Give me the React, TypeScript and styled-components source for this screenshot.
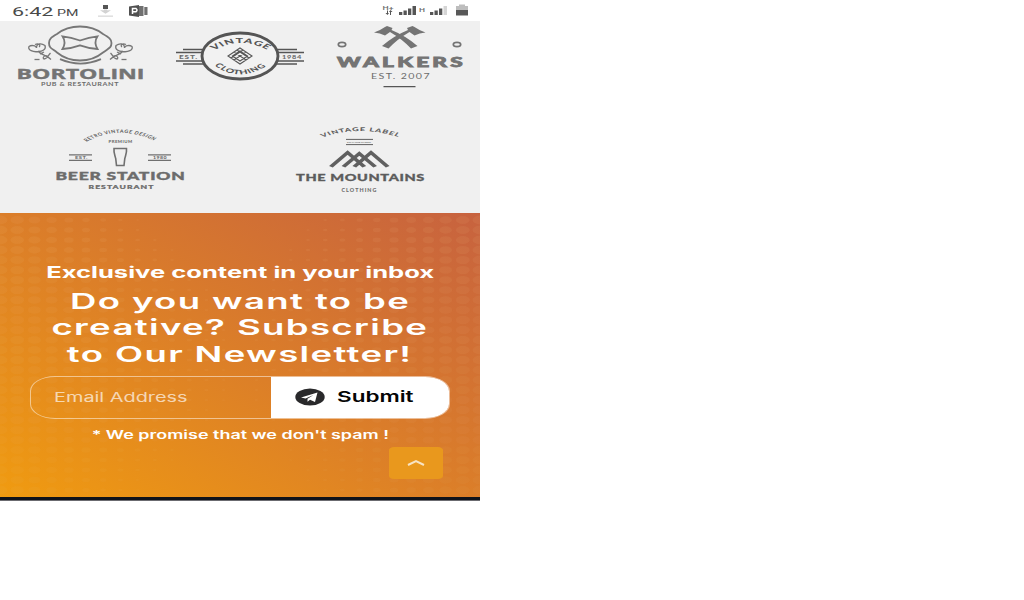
import React from 'react';
import styled, { createGlobalStyle } from 'styled-components';

const GlobalStyle = createGlobalStyle`
  body { margin: 0; background: #fff; font-family: Inter, "Liberation Sans", sans-serif; }
  * { box-sizing: border-box; }
`;

const Screen = styled.div`
  width: 480px;
  display: flex;
  flex-direction: column;
`;

const StatusBar = styled.header`
  height: 21px;
  display: flex;
  align-items: center;
  justify-content: space-between;
  background: #fff;
`;

const Logos = styled.section`
  height: 192px;
  background: #f0f0f0;
  display: flex;
  flex-direction: column;
  gap: 29px;
`;

const LogoRow = styled.div<{ $columns: number }>`
  display: grid;
  grid-template-columns: repeat(${p => p.$columns}, 1fr);
`;

const Drawing = styled.svg`
  display: block;
  font-family: Lato, sans-serif;
`;

const Newsletter = styled.section`
  height: 284px;
  display: grid;
  background: linear-gradient(to top right, #f09b10 0%, #dc7f28 48%, #c7623f 100%);
`;

const DotPattern = styled.svg`
  grid-area: 1 / 1;
  display: block;
`;

const Content = styled.div`
  grid-area: 1 / 1;
  z-index: 1;
  display: flex;
  flex-direction: column;
  align-items: center;
  padding: 47px 30px 0;
  color: #fff;
`;

const Line = styled.div<{ $height: number; $gap?: number }>`
  height: ${p => p.$height}px;
  line-height: ${p => p.$height}px;
  margin-top: ${p => p.$gap ?? 0}px;
  display: flex;
  justify-content: center;
`;

const Wide = styled.span<{ $size: number; $weight?: number; $scale: number; $spacing?: number; $origin?: string }>`
  display: inline-block;
  white-space: nowrap;
  font-size: ${p => p.$size}px;
  font-weight: ${p => p.$weight ?? 400};
  letter-spacing: ${p => p.$spacing ?? 0}px;
  transform: scaleX(${p => p.$scale});
  transform-origin: ${p => p.$origin ?? 'center'};
`;

const Form = styled.div`
  width: 420px;
  height: 43px;
  margin-top: 9px;
  display: flex;
  border: 1px solid rgba(255, 255, 255, 0.5);
  border-radius: 25px / 15px;
  overflow: hidden;
`;

const EmailField = styled.div`
  flex: 1;
  display: flex;
  align-items: center;
  padding: 0 0 2px 23px;
  color: rgba(255, 255, 255, 0.68);
`;

const SubmitButton = styled.button`
  width: 178px;
  border: 0;
  padding: 0 0 2px 24px;
  display: flex;
  align-items: center;
  gap: 12px;
  background: #fff;
  color: #050505;
  font-family: inherit;
`;

const TopButton = styled.button`
  width: 54px;
  height: 32px;
  margin: 0 7px 0 0;
  padding: 0;
  align-self: flex-end;
  display: grid;
  place-items: center;
  border: 0;
  border-radius: 5px / 3px;
  background: #e9981d;
`;

const FooterEdge = styled.footer`
  height: 4px;
  background: #10131a;
  border-bottom: 1px solid #6b6b70;
`;

const dots: { x: number; y: number; k: number }[] = [];
for (let row = 0; row < 28; row++) {
  const y = 7 + row * 10;
  const bulge = Math.sin((Math.PI * y) / 284);
  const left = 130 + 110 * bulge;
  const right = 160 + 80 * bulge;
  for (let col = 0; col < 14; col++) {
    const d = col * 17.2;
    if (d < left) dots.push({ x: d, y, k: 1 - d / left });
    if (d < right) dots.push({ x: 480 - d, y, k: 1 - d / right });
  }
}

type LabelProps = {
  x: number; y: number; w: number; size: number;
  weight?: number; fill?: string; font?: string; spacing?: number; bold?: number;
  children: string;
};

const Label = ({ x, y, w, size, weight = 700, fill = '#6c6c6c', font, spacing = 0, bold = 0, children }: LabelProps) => (
  <text
    x={x} y={y} textLength={w} lengthAdjust="spacingAndGlyphs" fontSize={size} fontWeight={weight}
    fill={fill} fontFamily={font} letterSpacing={spacing} stroke={bold ? fill : 'none'} strokeWidth={bold}
  >
    {children}
  </text>
);

const ArcLabel = ({ id, d, size, w, children }: { id: string; d: string; size: number; w: number; children: string }) => (
  <>
    <path id={id} d={d} fill="none" />
    <text fontSize={size} fontWeight={900} textLength={w} lengthAdjust="spacingAndGlyphs" letterSpacing="0.5">
      <textPath href={`#${id}`} textLength={w} lengthAdjust="spacingAndGlyphs">{children}</textPath>
    </text>
  </>
);

const Bortolini = () => (
  <Drawing width="160" height="70" viewBox="0 21 160 70" fill="none" stroke="#777" strokeWidth="1.800">
    <path d="M80 26.500C91 26.500 98 30 103 34C109 37.500 111.500 39 111.500 43C111.500 48 108 48.500 103 52.500C97 57.500 90 60.500 80 60.500C70 60.500 63 57.500 57 52.500C52 48.500 49 48 49 43C49 39 51 37.500 57 34C62 30 69 26.500 80 26.500z" />
    <path d="M62.500 36.300Q71 37 80 40.500Q89 37 97.500 36.300Q93.500 42.500 97.500 49Q89 48.500 80 45.300Q71 48.500 62.500 49Q66.500 42.500 62.500 36.300z" />
    <path d="M60 59.200c13 5.500 28 5.500 41 0" />
    <g id="sprig" strokeWidth="1.300">
      <path d="M29 46.500c2-1.500 7-1.500 7.500 1.500 0-5 5-5 8.500-2.500 1.500 4-3 6-6.500 6-5.500 1-11-1.500-9.500-5zM35 44.500c4-2 6 1 4 2.500M38 51c3 4 8 4 13 8.500M43.500 59c-1-2 1-4 4-3M43.500 59c4 0 4-3 7-6M40 54l4-2" />
      <path d="M34.500 59.500h5" />
    </g>
    <use href="#sprig" transform="translate(161 0) scale(-1 1)" />
    <g stroke="none">
      <Label x={16.5} y={79} w={128} size={14.5} fill="#747474" font="Open Sans" bold={0.4}>BORTOLINI</Label>
      <Label x={41} y={86} w={78} size={5.2} spacing={0.4}>PUB &amp; RESTAURANT</Label>
    </g>
  </Drawing>
);

const Vintage = () => (
  <Drawing width="160" height="70" viewBox="160 21 160 70" fill="none" stroke="#555">
    <path d="M183 49.500h20M176 52.500h26M176 61h26M183 64h21M277 49.500h20M278 52.500h26M278 61h26M276 64h21" strokeWidth="1.500" />
    <ellipse cx="240" cy="56" rx="38" ry="23" strokeWidth="2.900" fill="#f2f2f2" />
    <path d="M240 48l12 8-12 8-12-8zM240 51l7.500 5-7.500 5-7.500-5zM234 52l12 8M246 52l-12 8M237 50l12 8M243 50l-12 8" strokeWidth="1.100" />
    <g stroke="none" fill="#555">
      <Label x={179} y={58.8} w={19} size={5} weight={900} spacing={0.5}>EST.</Label>
      <Label x={282} y={58.8} w={20} size={5} weight={900} spacing={0.5}>1984</Label>
      <g transform="translate(240 56) scale(1.67 1)">
        <ArcLabel id="vint" d="M-15.500 -5.500Q0 -20.500 17 -5.500" size={6.8} w={36}>VINTAGE</ArcLabel>
        <ArcLabel id="cloth" d="M-15.500 9.500Q0 27.500 17 9" size={6} w={37}>CLOTHING</ArcLabel>
      </g>
    </g>
  </Drawing>
);

const Walkers = () => (
  <Drawing width="160" height="70" viewBox="320 21 160 70" fill="#747474">
    <path id="axe" d="M374 32.500Q380 30.500 385 27l2-1 5.500 2-1 2Q406 36 417.500 46L411 48.500Q402 39 390 32l-5 3.500Q380 33 374 32.500z" />
    <use href="#axe" transform="translate(799.500 0) scale(-1 1)" />
    <g fill="none" stroke="#747474" strokeWidth="1.700">
      <ellipse cx="342" cy="44.500" rx="3.700" ry="2.100" />
      <ellipse cx="457" cy="44.500" rx="3.700" ry="2.100" />
    </g>
    <Label x={337} y={67} w={129} size={13} weight={900} fill="#747474" spacing={1.9} bold={0.8}>WALKERS</Label>
    <Label x={371} y={79} w={60} size={6.8} weight={400} spacing={0.9}>EST. 2007</Label>
    <path d="M383.500 86h32v1.300h-32z" fill="#555" />
  </Drawing>
);

const BeerStation = () => (
  <Drawing width="240" height="80" viewBox="0 120 240 80" fill="none" stroke="#707070" strokeWidth="1.200">
    <g stroke="none" fill="#666">
      <g transform="translate(120 120) scale(1.67 1)">
        <ArcLabel id="retro" d="M-20 22Q0 3.500 22 22" size={4.6} w={45}>RETRO VINTAGE DESIGN</ArcLabel>
      </g>
      <Label x={108.5} y={142.7} w={24} size={3.2} weight={900} spacing={0.3}>PREMIUM</Label>
      <Label x={75} y={158.600} w={13} size={3.5} weight={900} spacing={0.3}>EST.</Label>
      <Label x={153} y={158.600} w={14} size={3.5} weight={900} spacing={0.3}>1980</Label>
      <Label x={55.5} y={179.6} w={130} size={11} weight={900} spacing={0.5} bold={0.4}>BEER STATION</Label>
      <Label x={88.5} y={189.4} w={66} size={4.8} weight={900} spacing={0.6} bold={0.2}>RESTAURANT</Label>
    </g>
    <path d="M69 154.800h23M69 160.300h23M148 154.800h23M148 160.300h23" />
    <path d="M114 148.500h12.500c.5 4-1 7-1.700 10l-.8 7h-7.500l-.8-7c-.7-3-2.200-6-1.700-10z" strokeWidth="1.600" />
  </Drawing>
);

const Mountains = () => (
  <Drawing width="240" height="80" viewBox="240 120 240 80" fill="none" stroke="#606060">
    <g stroke="none" fill="#606060">
      <g transform="translate(360 120) scale(1.67 1)">
        <ArcLabel id="vl" d="M-22.500 17.500Q0 4.500 24 17.500" size={5.2} w={48}>VINTAGE LABEL</ArcLabel>
      </g>
      <Label x={347} y={143} w={24} size={2.6}>EST IN OUR MARKET</Label>
      <Label x={296} y={181} w={129} size={9.4} weight={900} fill="#5c5c5c" spacing={0.4} bold={0.3}>THE MOUNTAINS</Label>
      <Label x={341.5} y={191.7} w={36} size={5} weight={900} spacing={1}>CLOTHING</Label>
    </g>
    <path d="M346 139.400h27M346 144.600h27" strokeWidth="1" />
    <g transform="translate(359.300 0) scale(1.67 1)">
      <path d="M-17 166.800L-7 152.500L3 166.800M-9.500 166.800L0 153.500L9.500 166.800M-3 166.800L7 152.500L17 166.800" strokeWidth="2.700" />
    </g>
  </Drawing>
);

const Download = () => (
  <svg width="16" height="14" viewBox="97 4 16 14">
    <path d="M103 5h5v4h-5z" fill="#555" />
    <path d="M104 9.500h3v.8h4l-5.500 3.500-5.500-3.500h4z" fill="#d2d2d2" />
    <path d="M98 15.500h15v1.300h-15z" fill="#d8d8d8" />
  </svg>
);

const AppBadge = () => (
  <svg width="20" height="12" viewBox="128 5 20 12">
    <path d="M129 6.500l10-1.500v12l-10-1.500z" fill="#505050" />
    <path d="M139 6h4.500v10h-4.500zM144.300 7h3.200v8h-3.200z" fill="#707070" />
    <path d="M132.500 14v-5.500h3.500q2 1.500 0 3.300h-3.500" fill="none" stroke="#fff" strokeWidth="1.500" />
  </svg>
);

const Signals = () => (
  <svg width="88" height="14" viewBox="382 4 88 14" fill="#555" fontFamily="Roboto">
    <Label x={382.5} y={10} w={11} size={6} weight={500}>H+</Label>
    <path d="M387 10.500h1v4h-1zM385.500 13h3.500l-1.500 2zM390 11h1v4h-1zM389 12l1.500-2 2 2z" />
    <path d="M399 12h3.300v3h-3.300zM403.500 10.500h3.300v4.500h-3.300zM408 8.500h3.300v6.500h-3.300zM412.500 6h3.500v9h-3.500z" />
    <Label x={419} y={12} w={6} size={5.5} weight={500}>H</Label>
    <path d="M430 12h3.300v3h-3.300zM434.500 10.500h3.300v4.500h-3.300zM439 8.500h3.300v6.500h-3.300z" />
    <path d="M443.500 6h3.500v9h-3.500z" fill="#d5d5d5" />
    <path d="M459 4.500h6v1.500h3v4h-12v-4h3z" fill="#bdbdbd" />
    <path d="M456 10h12v5.500h-12z" fill="#585858" />
  </svg>
);

const StatusGroup = styled.div`
  display: flex;
  align-items: center;
`;

const Clock = styled.div`
  width: 85px;
  padding-left: 12px;
  display: flex;
  align-items: baseline;
  color: #4a4a4a;
  font-family: Roboto, sans-serif;
`;

const Hours = styled.div`
  width: 45px;
`;

const IconPair = styled.div`
  display: flex;
  align-items: center;
  gap: 15px;
  padding-left: 12px;
`;

const SignalGroup = styled.div`
  padding-right: 10px;
  display: flex;
`;

const Headline = ({ gap, children }: { gap?: number; children: string }) => (
  <Line $height={26.4} $gap={gap}>
    <Wide $size={21.5} $weight={600} $scale={1.7} $spacing={0.8}>{children}</Wide>
  </Line>
);

export default function App() {
  return (
    <>
      <GlobalStyle />
      <Screen>
        <StatusBar>
          <StatusGroup>
            <Clock>
              <Hours><Wide $size={13} $scale={1.65} $origin="left">6:42</Wide></Hours>
              <Wide $size={9.5} $scale={1.5} $origin="left">PM</Wide>
            </Clock>
            <IconPair><Download /><AppBadge /></IconPair>
          </StatusGroup>
          <SignalGroup><Signals /></SignalGroup>
        </StatusBar>
        <Logos>
          <LogoRow $columns={3}><Bortolini /><Vintage /><Walkers /></LogoRow>
          <LogoRow $columns={2}><BeerStation /><Mountains /></LogoRow>
        </Logos>
        <Newsletter>
          <DotPattern width="480" height="284" fill="#f0c088">
            {dots.map((d, i) => (
              <ellipse key={i} cx={d.x} cy={d.y} rx={1.5 + 6 * d.k} ry={0.8 + 3.6 * d.k} fillOpacity={0.09 - 0.04 * (d.y / 284)} />
            ))}
          </DotPattern>
          <Content>
            <Line $height={26}><Wide $size={15.3} $weight={700} $scale={1.67}>Exclusive content in your inbox</Wide></Line>
            <Headline gap={2}>Do you want to be</Headline>
            <Headline>creative? Subscribe</Headline>
            <Headline>to Our Newsletter!</Headline>
            <Form>
              <EmailField><Wide $size={13} $scale={1.53} $origin="left">Email Address</Wide></EmailField>
              <SubmitButton>
                <svg width="30" height="18" viewBox="0 0 30 18">
                  <ellipse cx="15" cy="9" rx="14.700" ry="8.600" fill="#29292b" />
                  <path d="M6 9.500L22.500 4.500 20 14l-5-2.200-2.500 2v-3l6-3.800-8 3.400z" fill="#fff" />
                </svg>
                <Wide $size={15} $weight={600} $scale={1.5} $origin="left">Submit</Wide>
              </SubmitButton>
            </Form>
            <Line $height={24} $gap={4}><Wide $size={11.5} $weight={600} $scale={1.56}>* We promise that we don't spam !</Wide></Line>
            <TopButton>
              <svg width="18" height="8" viewBox="0 0 18 8" fill="none" stroke="#f8e4c4" strokeWidth="2">
                <path d="M1 6L9 2l8 4" />
              </svg>
            </TopButton>
          </Content>
        </Newsletter>
        <FooterEdge />
      </Screen>
    </>
  );
}
